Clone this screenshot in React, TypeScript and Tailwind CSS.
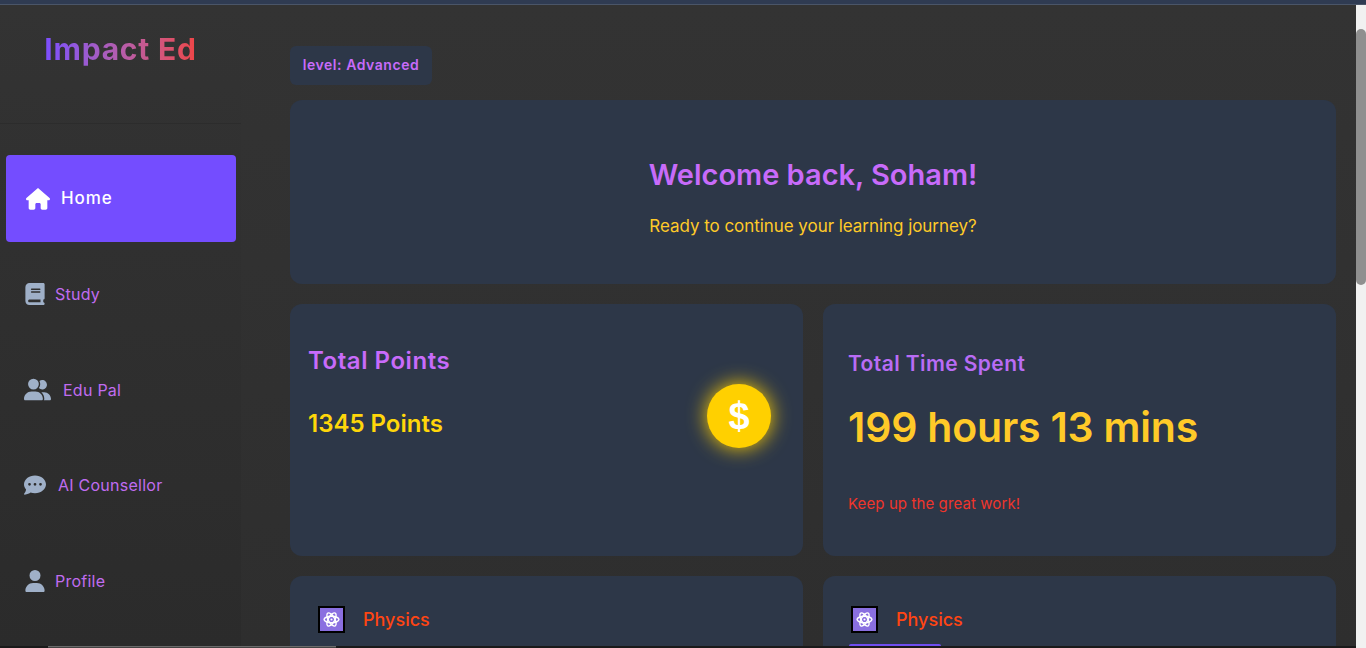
import { FaHouse, FaBook, FaUserGroup, FaCommentDots, FaUser } from "react-icons/fa6";
import type { ReactNode } from "react";

function NavItem({ icon, label, gap }: { icon: ReactNode; label: string; gap: string }) {
  return (
    <a className={`h-[95.8px] pl-[24px] flex items-center ${gap} text-[#c06cf0] text-[16px] tracking-[0.25px]`}>
      <span className="text-[#9fb0c8] flex">{icon}</span>
      {label}
    </a>
  );
}

function AtomIcon() {
  return (
    <svg width="17" height="17" viewBox="0 0 24 24" fill="none" stroke="white" strokeWidth="2">
      <ellipse cx="12" cy="12" rx="10.5" ry="4.5" />
      <ellipse cx="12" cy="12" rx="10.5" ry="4.5" transform="rotate(60 12 12)" />
      <ellipse cx="12" cy="12" rx="10.5" ry="4.5" transform="rotate(120 12 12)" />
      <circle cx="12" cy="12" r="1.5" fill="white" stroke="none" />
    </svg>
  );
}

function SubjectCard({ bar }: { bar?: boolean }) {
  return (
    <div className="bg-[#2d3748] rounded-t-xl h-[72px] relative">
      <div className="flex items-center pt-[30px] pl-[28px] gap-[18px]">
        <div className="w-[27px] h-[27px] bg-[#8a6fe0] border-2 border-black flex items-center justify-center">
          <AtomIcon />
        </div>
        <span className="text-[#ff4513] text-[18px] font-medium">Physics</span>
      </div>
      {bar && <div className="absolute left-[26px] bottom-[2px] w-[92px] h-[2px] rounded-t bg-[#6f4ef0]" />}
    </div>
  );
}

export default function App() {
  return (
    <div className="h-[648px] overflow-hidden flex flex-col relative font-['Inter','Liberation_Sans',sans-serif]">
      <div className="h-[5px] bg-[#2f3b52] border-b border-[#4a5568]" />
      <div className="flex-1 flex min-h-0">
        <aside className="w-[241px] shrink-0 bg-gradient-to-b from-[#333333] to-[#2b2b2b]">
          <div className="h-[119px] border-b border-[#2c2c2c] pt-[24px] text-center">
            <span className="text-[30px] leading-[40px] font-bold tracking-[0.8px] bg-gradient-to-r from-[#7c4dff] to-[#ef4444] bg-clip-text text-transparent">
              Impact Ed
            </span>
          </div>
          <nav className="pt-[31px]">
            <a className="ml-[6px] w-[230px] h-[87px] rounded bg-[#744dff] text-white flex items-center pl-[20px] gap-[11px] text-[17px] font-medium tracking-[0.9px] mb-[4px]">
              <FaHouse size={24} />
              Home
            </a>
            <NavItem icon={<FaBook size={22} />} label="Study" gap="gap-[9px]" />
            <NavItem icon={<FaUserGroup size={27} />} label="Edu Pal" gap="gap-[12px]" />
            <NavItem icon={<FaCommentDots size={22} />} label="AI Counsellor" gap="gap-[12px]" />
            <NavItem icon={<FaUser size={22} />} label="Profile" gap="gap-[9px]" />
          </nav>
        </aside>

        <main className="flex-1 min-w-0 bg-gradient-to-b from-[#333333] to-[#2e2e2e] pl-[49px] pr-[20px] pt-[41px]">
          <div className="w-[142px] h-[39px] pb-[2px] rounded-md bg-[#2d3748] flex items-center justify-center text-[#c86bfa] text-[14px] font-semibold tracking-[0.55px]">
            level: Advanced
          </div>

          <section className="mt-[15px] h-[184px] rounded-xl bg-[#2d3748] flex flex-col items-center pt-[57px]">
            <h1 className="text-[#c86bfa] text-[29px] leading-[36px] font-semibold">Welcome back, Soham!</h1>
            <p className="mt-[21px] text-[#ffca28] text-[17px] leading-[24px] tracking-[-0.05px]">Ready to continue your learning journey?</p>
          </section>

          <div className="mt-[20px] grid grid-cols-2 gap-[20px]">
            <div className="h-[252px] rounded-xl bg-[#2d3748] relative pl-[18px] pt-[41px]">
              <h2 className="text-[#c86bfa] text-[24px] leading-[32px] font-semibold tracking-[0.55px]">Total Points</h2>
              <p className="mt-[31px] text-[#ffd60a] text-[24px] leading-[32px] font-semibold">1345 Points</p>
              <div className="absolute left-[417px] top-[80px] w-[64px] h-[64px] rounded-full bg-[#ffd000] shadow-[0_0_20px_#ffd000] flex items-center justify-center text-white text-[38px] font-bold font-['Liberation_Sans',sans-serif]">
                $
              </div>
            </div>
            <div className="h-[252px] rounded-xl bg-[#2d3748] pl-[25px] pt-[45px]">
              <h2 className="text-[#b96cf5] text-[21px] leading-[30px] font-semibold tracking-[0.4px]">Total Time Spent</h2>
              <p className="mt-[20px] text-[#ffca28] text-[41px] leading-[56px] font-semibold tracking-[-0.2px]">199 hours 13 mins</p>
              <p className="mt-[37px] text-[#f0352b] text-[15px] leading-[24px] tracking-[0.1px]">Keep up the great work!</p>
            </div>
          </div>

          <div className="mt-[20px] grid grid-cols-2 gap-[20px]">
            <SubjectCard />
            <SubjectCard bar />
          </div>
        </main>

        {/* browser scrollbar */}
        <div className="w-[10px] shrink-0 bg-[#f1f1f1] pt-[24px] flex flex-col">
          <div className="h-[256px] rounded-full bg-[#8f8f8f]" />
        </div>
      </div>

      {/* bottom scrollbar strip */}
      <div className="absolute left-0 bottom-0 w-[1356px] h-[2px] bg-[#1a1a1a]">
        <div className="ml-[48px] w-[288px] h-[2px] border-t border-[#6b6b6b] bg-[#444444]" />
      </div>
    </div>
  );
}
